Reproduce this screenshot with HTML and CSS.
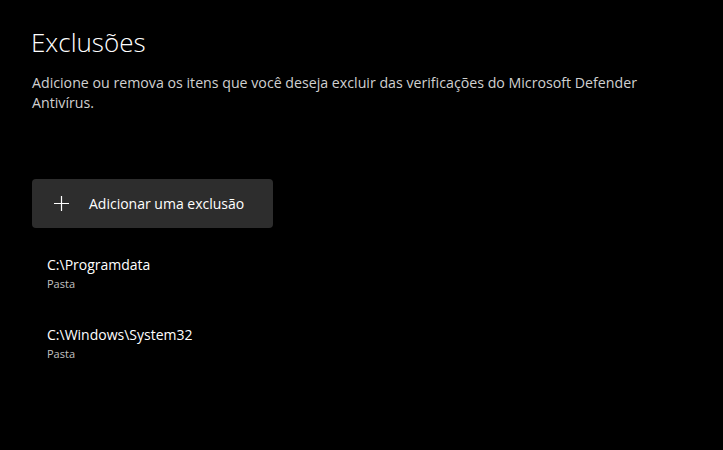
FILE: index.html
```html
<!DOCTYPE html>
<html lang="pt-BR">
<head>
  <meta charset="UTF-8">
  <meta name="viewport" content="width=device-width, initial-scale=1.0">
  <title>Exclusões</title>
  <link rel="stylesheet" href="styles.css">
</head>
<body>
  <main class="page">
    <!-- cabecalho -->
    <h1 class="page-title">Exclusões</h1>
    <p class="page-desc">Adicione ou remova os itens que você deseja excluir das verificações do Microsoft Defender Antivírus.</p>

    <!-- boton agregar -->
    <button class="add-btn" type="button">
      <svg class="add-icon" width="15" height="15" viewBox="0 0 15 15">
        <path d="M7.5 0V15M0 7.5H15" stroke="#fff" stroke-width="1.2" fill="none"/>
      </svg>
      <span>Adicionar uma exclusão</span>
    </button>

    <!-- lista de exclusiones -->
    <ul class="excl-list">
      <li class="excl-item">
        <span class="excl-path">C:\Programdata</span>
        <span class="excl-type">Pasta</span>
      </li>
      <li class="excl-item">
        <span class="excl-path">C:\Windows\System32</span>
        <span class="excl-type">Pasta</span>
      </li>
    </ul>
  </main>
</body>
</html>
```

FILE: styles.css
```css
*{
  margin: 0;
  padding: 0;
  box-sizing: border-box;
}

:root{
  --bg:#000;
  --text:#fff;
  --text-soft:#d0d0d0;
  --text-dim:#c2c2c2;
  --btn-bg:#2d2d2d;
}

html,body{
  background: var(--bg);
  height: 100%;
}

body{
  font-family: "Open Sans", "Noto Sans", sans-serif;
  color: var(--text);
}

.page{
  padding: 24px 32px 0 31px;
}

/* titulo */
.page-title{
  font-size: 26px;
  font-weight: 300;
  line-height: 36px;
}

.page-desc{
  margin-top: 13px;
  max-width: 650px;
  font-size: 14.2px;
  line-height: 20px;
  color: var(--text-soft);
  padding-left: 1px;
}

/* boton */
.add-btn{
  margin-top: 66px;
  margin-left: 1px;
  width: 241px;
  height: 49px;
  display: flex;
  align-items: center;
  gap: 20px;
  padding-left: 22px;
  background: var(--btn-bg);
  border: none;
  border-radius: 4px;
  color: var(--text);
  font-family: inherit;
  font-size: 14px;
  cursor: pointer;
}

.add-icon{
  flex: none;
}

/* lista */
.excl-list{
  list-style: none;
  margin-top: 27px;
  padding-left: 16px;
}

.excl-item{
  display: flex;
  flex-direction: column;
  height: 70px;
}

.excl-path{
  font-size: 14px;
  line-height: 20px;
}

.excl-type{
  font-size: 11px;
  line-height: 18px;
  color: var(--text-dim);
}
```
